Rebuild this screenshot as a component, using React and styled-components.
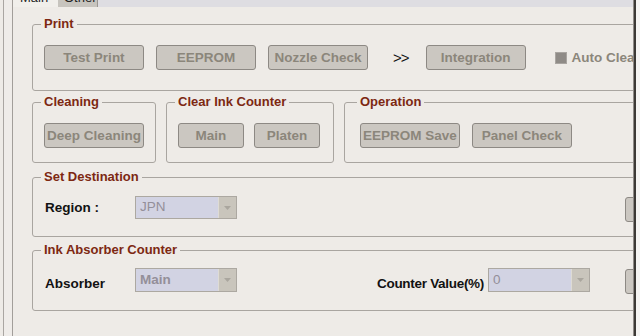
import React from 'react';
import styled, { createGlobalStyle } from 'styled-components';

const GlobalStyle = createGlobalStyle`
  html, body {
    margin: 0;
    padding: 0;
    background: #eeebe7;
  }
  body {
    font-family: "Liberation Sans", Arial, sans-serif;
    width: 640px;
    height: 336px;
    overflow: hidden;
  }
`;

const Window = styled.div`
  display: flex;
  width: 640px;
  height: 336px;
  background: #eeebe7;
`;

const LeftFrame = styled.div`
  flex: none;
  width: 8px;
  margin-left: 3px;
  border-left: 1px solid #aaa6a2;
  background: #efece9;
`;

const RightFrame = styled.div`
  flex: none;
  width: 7px;
  box-sizing: border-box;
  border-left: 1px solid #8f8b87;
  box-shadow: inset 2px 0 0 #3c3935;
  background: #f5f4f2;
`;

const Main = styled.div`
  flex: 1;
  min-width: 0;
  display: flex;
  flex-direction: column;
  overflow: hidden;
  border-left: 1px solid #a29e9a;
`;

const TabStrip = styled.div`
  flex: none;
  height: 7px;
  display: flex;
  background: #dedde2;
`;

const Tab = styled.div`
  width: ${(p) => p.$w}px;
  height: 7px;
  overflow: hidden;
  box-sizing: border-box;
  padding-left: ${(p) => p.$pad}px;
  background: ${(p) => (p.$active ? '#f1efeb' : '#c7c4be')};
  border-right: ${(p) => (p.$active ? 'none' : '1px solid #9a9691')};
  font-size: 13px;
  line-height: 14px;
  color: #222;
`;

const TabText = styled.div`
  margin-top: -9px;
`;

const Panel = styled.div`
  flex: 1;
  display: flex;
  flex-direction: column;
  padding: 9px 0 0 19px;
`;

const Group = styled.fieldset`
  margin: ${(p) => p.$top || 0}px ${(p) => (p.$bleed ? -60 : 0)}px 0 0;
  min-width: 0;
  flex: ${(p) => (p.$grow ? 1 : 'none')};
  width: ${(p) => (p.$w ? `${p.$w}px` : 'auto')};
  box-sizing: border-box;
  border: 1px solid #a9a5a0;
  border-radius: 3px;
  padding: ${(p) => p.$pt}px ${(p) => (p.$bleed ? 7 : 0)}px ${(p) => p.$pb}px ${(p) => p.$pl || 11}px;
`;

const Legend = styled.legend`
  padding: 0 3px;
  margin-left: -3px;
  font-size: 13px;
  font-weight: bold;
  line-height: 16px;
  color: #7d2812;
`;

const GroupRow = styled.div`
  display: flex;
  gap: 10px;
  margin-top: 3px;
`;

const Row = styled.div`
  display: flex;
  align-items: ${(p) => (p.$top ? 'flex-start' : 'center')};
  gap: ${(p) => (p.$gap !== undefined ? p.$gap : 12)}px;
`;

const Button = styled.button`
  flex: none;
  width: ${(p) => p.$w || 100}px;
  height: 25px;
  margin-top: ${(p) => p.$mt || 0}px;
  box-sizing: border-box;
  padding: 0;
  border: 1px solid #8d8984;
  border-radius: 3px;
  background: #cbc7c1;
  font-family: "Liberation Sans", Arial, sans-serif;
  font-size: 13.5px;
  font-weight: bold;
  color: #8b867b;
  white-space: nowrap;
`;

const Arrows = styled.span`
  margin: 0 5px 0 13px;
  font-size: 15px;
  letter-spacing: -1px;
  color: #111;
`;

const Check = styled.span`
  flex: none;
  width: 12px;
  height: 12px;
  box-sizing: border-box;
  margin-left: 17px;
  background: #8f8b87;
  border: 1px solid #a9a5a1;
`;

const CheckLabel = styled.span`
  margin-left: -7px;
  font-size: 13.5px;
  font-weight: bold;
  color: #8b867b;
  white-space: nowrap;
`;

const FieldLabel = styled.span`
  flex: none;
  width: ${(p) => p.$w || 90}px;
  margin-left: 1px;
  padding-top: ${(p) => p.$pt || 0}px;
  font-size: 13.5px;
  font-weight: bold;
  line-height: 16px;
  color: #121212;
  white-space: nowrap;
`;

const CounterLabel = styled(FieldLabel)`
  width: auto;
  margin: 0 4px 0 0;
  letter-spacing: -0.3px;
`;

const Select = styled.div`
  flex: none;
  display: flex;
  width: 102px;
  height: ${(p) => p.$h || 23}px;
  box-sizing: border-box;
  border: 1px solid #aca8a1;
  background: #d2d3e3;
`;

const SelectValue = styled.span`
  flex: 1;
  padding-left: 4px;
  font-size: 13.5px;
  line-height: ${(p) => (p.$h || 23) - 3}px;
  color: #948f99;
  font-weight: ${(p) => (p.$bold ? 'bold' : 'normal')};
`;

const SelectArrow = styled.span`
  flex: none;
  width: 17px;
  display: flex;
  align-items: center;
  justify-content: center;
  background: #c9c5bc;
  border-left: 1px solid #dedbd4;
`;

const Spacer = styled.div`
  flex: ${(p) => (p.$w ? 'none' : 1)};
  width: ${(p) => p.$w || 0}px;
`;

const Caret = () => (
  <svg width="7" height="4" viewBox="0 0 7 4">
    <path d="M0 0 L7 0 L3.5 4 Z" fill="#aaa69e" />
  </svg>
);

const Dropdown = ({ value, h, bold }) => (
  <Select $h={h}>
    <SelectValue $h={h} $bold={bold}>{value}</SelectValue>
    <SelectArrow>
      <Caret />
    </SelectArrow>
  </Select>
);

export default function App() {
  return (
    <>
      <GlobalStyle />
      <Window>
        <LeftFrame />
        <Main>
          <TabStrip>
            <Tab $w={45} $pad={7} $active>
              <TabText>Main</TabText>
            </Tab>
            <Tab $w={40} $pad={6}>
              <TabText>Other</TabText>
            </Tab>
          </TabStrip>
          <Panel>
            <Group $pt={13} $pb={20} $bleed>
              <Legend>Print</Legend>
              <Row>
                <Button>Test Print</Button>
                <Button>EEPROM</Button>
                <Button>Nozzle Check</Button>
                <Arrows>&gt;&gt;</Arrows>
                <Button>Integration</Button>
                <Check />
                <CheckLabel>Auto Clear</CheckLabel>
              </Row>
            </Group>

            <GroupRow>
              <Group $w={124} $pt={13} $pb={14}>
                <Legend>Cleaning</Legend>
                <Row>
                  <Button>Deep Cleaning</Button>
                </Row>
              </Group>
              <Group $w={168} $pt={13} $pb={14}>
                <Legend>Clear Ink Counter</Legend>
                <Row $gap={10}>
                  <Button $w={66}>Main</Button>
                  <Button $w={66}>Platen</Button>
                </Row>
              </Group>
              <Group $grow $bleed $pt={13} $pb={14} $pl={15}>
                <Legend>Operation</Legend>
                <Row $gap={12}>
                  <Button>EEPROM Save</Button>
                  <Button>Panel Check</Button>
                </Row>
              </Group>
            </GroupRow>

            <Group $top={6} $pt={11} $pb={14} $bleed>
              <Legend>Set Destination</Legend>
              <Row $top $gap={0}>
                <FieldLabel $pt={4}>Region :</FieldLabel>
                <Dropdown value="JPN" h={23} />
                <Spacer />
                <Button $w={60} $mt={1} />
              </Row>
            </Group>

            <Group $top={5} $pt={10} $pb={16} $bleed>
              <Legend>Ink Absorber Counter</Legend>
              <Row $top $gap={0}>
                <FieldLabel $pt={8}>Absorber</FieldLabel>
                <Dropdown value="Main" h={24} bold />
                <Spacer />
                <CounterLabel $pt={8}>Counter Value(%)</CounterLabel>
                <Dropdown value="0" h={24} />
                <Spacer $w={35} />
                <Button $w={60} $mt={1} />
              </Row>
            </Group>
          </Panel>
        </Main>
        <RightFrame />
      </Window>
    </>
  );
}
